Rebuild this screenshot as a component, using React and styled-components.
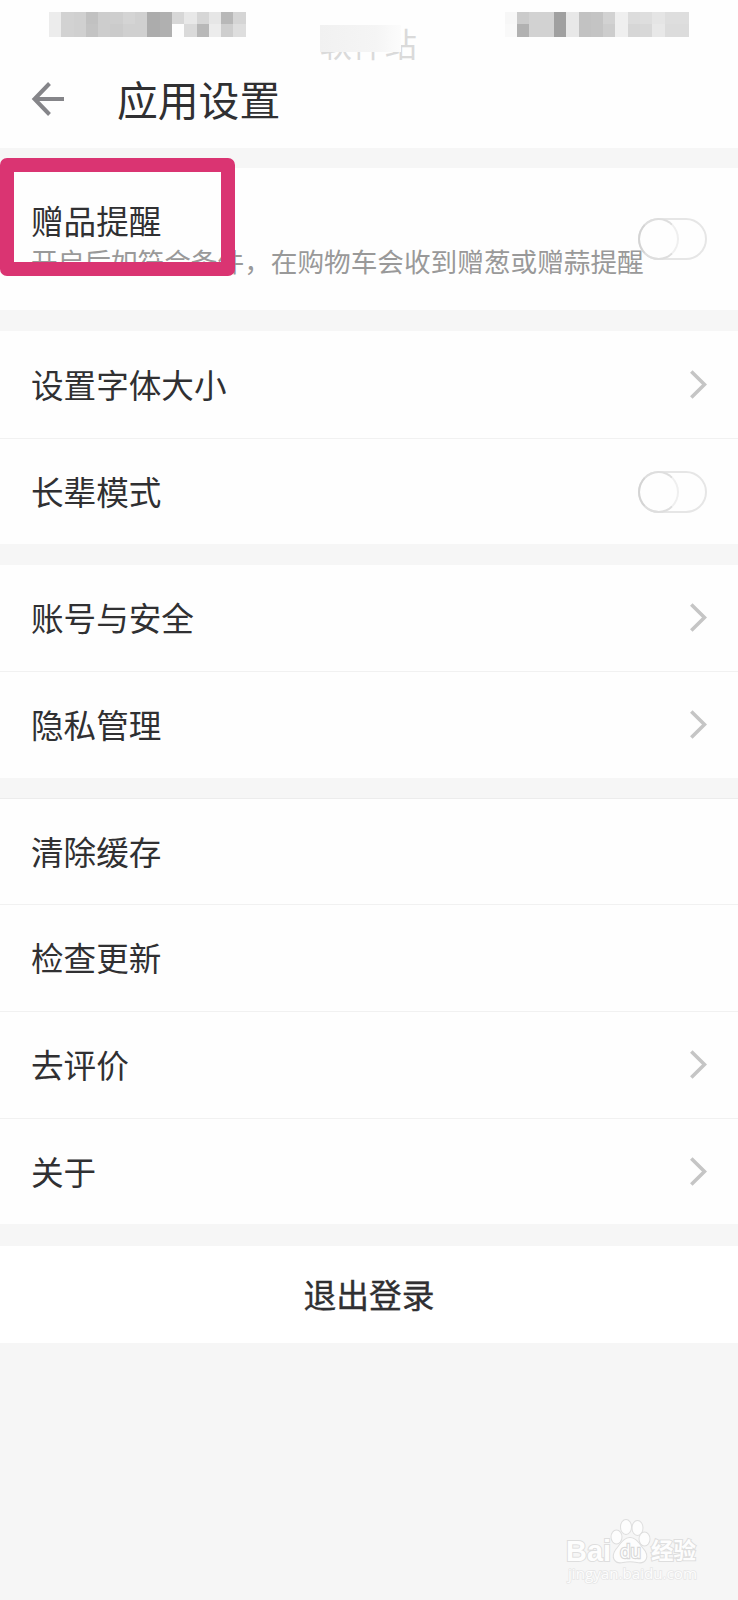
import React from 'react';
import styled, { createGlobalStyle } from 'styled-components';

const GlobalStyle = createGlobalStyle`
  * {
    box-sizing: border-box;
  }

  body {
    margin: 0;
    background-color: #f6f6f6;
    font-family: 'Noto Sans CJK SC', 'Liberation Sans', sans-serif;
    color: #303032;
  }
`;

const Page = styled.div`
  position: relative;
  display: flex;
  flex-direction: column;
  width: 738px;
  height: 1600px;
  overflow: hidden;
  background-color: #f6f6f6;
`;

const Header = styled.header`
  height: 148px;
  background-color: #fefefe;
`;

const StatusBar = styled.div`
  display: flex;
  align-items: flex-start;
  height: 60px;
  padding: 12px 0 0 49px;
`;

const Mosaic = styled.div`
  display: grid;
  grid-auto-flow: column;
  grid-template-rows: repeat(2, ${(props) => props.$size}px);
  grid-auto-columns: ${(props) => props.$size}px;
`;

const Pixel = styled.span`
  background-color: ${(props) => props.$color};
`;

const SiteName = styled.div`
  position: relative;
  width: 98px;
  height: 48px;
  margin: 12px 87px 0 74px;
  font-size: 32.4px;
  line-height: 37px;
  color: #dadada;
  white-space: nowrap;
`;

const SiteMask = styled.div`
  position: absolute;
  top: 1px;
  left: 0;
  width: 81px;
  height: 27px;
  background: linear-gradient(90deg, #f1f1f1, #f5f5f5 70%, #fcfcfc);
`;

const TitleBar = styled.div`
  display: flex;
  align-items: center;
  height: 77px;
  padding-left: 30px;
`;

const Title = styled.h1`
  margin: 0 0 0 51px;
  font-size: 40.8px;
  font-weight: 400;
  line-height: 60px;
`;

const Group = styled.section`
  margin-top: ${(props) => props.$gap || 20}px;
  background-color: #fefefe;
  box-shadow: ${(props) => (props.$edge ? '0 -1px 0 #ececec' : 'none')};
`;

const Row = styled.div`
  display: flex;
  align-items: center;
  justify-content: space-between;
  height: ${(props) => props.$height}px;
  padding: 0 31px;

  & + & {
    border-top: 1px solid #f1f1f1;
  }
`;

const Label = styled.span`
  margin-top: -2px;
  font-size: 32.6px;
  line-height: 48px;
  white-space: nowrap;
`;

const GiftText = styled.div`
  display: flex;
  flex-direction: column;
  width: 607px;
`;

const Hint = styled.span`
  margin-top: -2px;
  font-size: 26.65px;
  line-height: 38px;
  color: #999;
  white-space: nowrap;
`;

const Switch = styled.span`
  flex: none;
  width: 69px;
  height: 42px;
  border: 2px solid #e6e6e6;
  border-radius: 21px;
`;

const Knob = styled.span`
  display: block;
  width: 41px;
  height: 42px;
  margin: -2px 0 0 -2px;
  border: 2px solid #dedede;
  border-left-color: #d4d4d4;
  border-right-color: #efefef;
  border-radius: 50%;
`;

const Logout = styled.button`
  height: 97px;
  margin-top: 22px;
  padding: 0 0 2px;
  border: none;
  background-color: #fff;
  color: #303032;
  font-family: inherit;
  font-size: 32.8px;
  font-weight: 400;
  -webkit-text-stroke: 0.35px #303032;
`;

const Highlight = styled.div`
  position: absolute;
  top: 158px;
  left: 0;
  width: 235px;
  height: 118px;
  border: 14px solid #da3472;
  border-radius: 7px;
`;

const Watermark = styled.svg`
  position: absolute;
  top: 1515px;
  left: 562px;
`;

const leftPixels = [
  '#ececec', '#ececec', '#d2d2d2', '#d2d2d2', '#d0d0d0', '#d0d0d0',
  '#c1c1c1', '#c3c3c3', '#cdcdcd', '#cdcdcd', '#cecece', '#cbcbcb',
  '#d4d4d4', '#d0d0d0', '#d0d0d0', '#d0d0d0', '#acacac', '#acacac',
  '#b0b0b0', '#b0b0b0', '#d7d7d7', '#fdfdfd', '#e8e8e8', '#dadada',
  '#d6d6d6', '#b8b8b8', '#e6e6e6', '#ececec', '#b8b8b8', '#cecece',
  '#d5d5d5', '#dedede',
];

const rightPixels = [
  '#f7f7f7', '#f9f9f9', '#cbcbcb', '#b1b1b1', '#d2d2d2', '#d2d2d2',
  '#d2d2d2', '#d2d2d2', '#a0a0a0', '#a0a0a0', '#e8e8e8', '#e8e8e8',
  '#c2c2c2', '#c2c2c2', '#c4c4c4', '#c4c4c4', '#d2d2d2', '#cdcdcd',
  '#efefef', '#efefef', '#dcdcdc', '#d6d6d6', '#dedede', '#d8d8d8',
  '#e5e5e5', '#e8e8e8', '#dedede', '#dcdcdc', '#dedede', '#dcdcdc',
];

const Pixels = ({ colors }) => (
  <Mosaic $size={12.3}>
    {colors.map((color, i) => (
      <Pixel key={i} $color={color} />
    ))}
  </Mosaic>
);

const BackIcon = () => (
  <svg width="36" height="36" viewBox="0 0 36 36" fill="none" stroke="#858589" strokeWidth="4">
    <path d="M19.5 2.5 L4.5 18 L19.5 33.5 M4 18 H34" />
  </svg>
);

const Chevron = () => (
  <svg width="18" height="30" viewBox="0 0 18 30" fill="none" stroke="#c5c5c5" strokeWidth="3.6">
    <path d="M2.3 1.5 L15.5 14.5 L2.3 27.5" />
  </svg>
);

const Toggle = () => (
  <Switch>
    <Knob />
  </Switch>
);

const groups = [
  {
    gap: 21,
    rows: [
      { label: '设置字体大小', height: 107, chevron: true },
      { label: '长辈模式', height: 106, toggle: true },
    ],
  },
  {
    gap: 21,
    rows: [
      { label: '账号与安全', height: 106, chevron: true },
      { label: '隐私管理', height: 107, chevron: true },
    ],
  },
  {
    gap: 21,
    edge: true,
    rows: [
      { label: '清除缓存', height: 105 },
      { label: '检查更新', height: 107 },
      { label: '去评价', height: 107, chevron: true },
      { label: '关于', height: 106, chevron: true },
    ],
  },
];

function App() {
  return (
    <>
      <GlobalStyle />
      <Page>
        <Header>
          <StatusBar>
            <Pixels colors={leftPixels} />
            <SiteName>
              软件站
              <SiteMask />
            </SiteName>
            <Pixels colors={rightPixels} />
          </StatusBar>
          <TitleBar>
            <BackIcon />
            <Title>应用设置</Title>
          </TitleBar>
        </Header>

        <Group>
          <Row $height={142}>
            <GiftText>
              <Label>赠品提醒</Label>
              <Hint>开启后如符合条件，在购物车会收到赠葱或赠蒜提醒</Hint>
            </GiftText>
            <Toggle />
          </Row>
        </Group>

        {groups.map((group, i) => (
          <Group key={i} $gap={group.gap} $edge={group.edge}>
            {group.rows.map((row) => (
              <Row key={row.label} $height={row.height}>
                <Label>{row.label}</Label>
                {row.chevron && <Chevron />}
                {row.toggle && <Toggle />}
              </Row>
            ))}
          </Group>
        ))}

        <Logout>退出登录</Logout>

        <Highlight />

        <Watermark width="150" height="75" viewBox="0 0 150 75">
          <g fill="#fdfdfd" stroke="#dedede" strokeWidth="2" paintOrder="stroke">
            <text x="4" y="46" fontFamily="Liberation Sans" fontWeight="700" fontSize="30" textLength="45" lengthAdjust="spacingAndGlyphs">Bai</text>
            <ellipse cx="54.5" cy="22" rx="5" ry="6.5" />
            <ellipse cx="64" cy="12" rx="5" ry="7" />
            <ellipse cx="75.5" cy="13" rx="5" ry="7" />
            <ellipse cx="82.5" cy="24" rx="5" ry="6.5" />
            <path d="M68 23 C74 23 77 29 81 34 C88 42 83 49 75 47 C70 46 66 46 61 47 C53 49 49 42 54 35 C59 29 62 23 68 23 Z" />
            <text x="58" y="43" strokeWidth="2.4" stroke="#d8d8d8" fontFamily="Open Sans" fontSize="18" textLength="21" lengthAdjust="spacingAndGlyphs">du</text>
            <text x="89" y="44" fontFamily="Noto Sans CJK SC" fontWeight="700" fontSize="22.5">经验</text>
            <text x="6" y="64" strokeWidth="1.5" stroke="#e6e6e6" fontFamily="Open Sans" fontSize="15" textLength="129" lengthAdjust="spacingAndGlyphs">jingyan.baidu.com</text>
          </g>
        </Watermark>
      </Page>
    </>
  );
}

export default App;
